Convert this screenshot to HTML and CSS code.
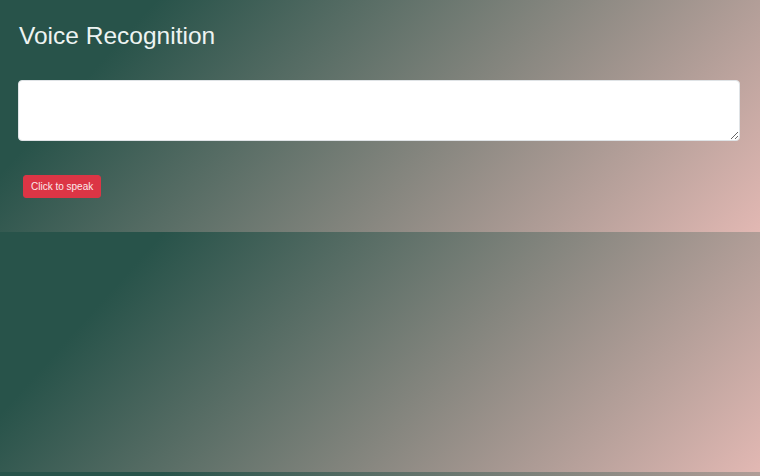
FILE: index.html
```html
<!DOCTYPE html>
<html lang="en">
<head>
<meta charset="utf-8">
<title>Voice Recognition</title>
<link rel="stylesheet" href="styles.css">
</head>
<body>
<main class="page">
  <h1 class="title">Voice Recognition</h1>
  <textarea class="transcript" rows="2"></textarea>
  <div class="actions">
    <button class="speak-btn" type="button">Click to speak</button>
  </div>
</main>
</body>
</html>
```
FILE: styles.css
```css
html {
  height: 100%;
  background-color: #28534a;
  background-image: linear-gradient(132deg, #28534a 16.8%, #e2b8b3 100%);
  background-size: 100% 240px;
  background-position: 0 -8px;
  background-repeat: repeat-y;
}

body {
  margin: 0;
  font-family: "Liberation Sans", Arial, sans-serif;
  color: #f4f6f5;
}

.page {
  display: flex;
  flex-direction: column;
  align-items: stretch;
  padding: 21px 20px 0 18px;
}

.title {
  margin: 0 0 0 1px;
  font-size: 24.5px;
  line-height: 1.2;
  font-weight: 400;
  color: #eef4f2;
}

.transcript {
  margin-top: 30px;
  box-sizing: border-box;
  height: 61px;
  width: 100%;
  padding: 6px 12px;
  border: 1px solid #dfe3e6;
  border-radius: 4px;
  background: #ffffff;
  font-family: "Liberation Sans", Arial, sans-serif;
  font-size: 16px;
  line-height: 1.5;
  resize: vertical;
}

.actions {
  display: flex;
  padding: 34px 0 0 5px;
}

.speak-btn {
  box-sizing: border-box;
  height: 23px;
  padding: 0 7px;
  border: 1px solid #dc3545;
  border-radius: 3px;
  background: #dc3545;
  color: #fbe9eb;
  font-family: "Liberation Sans", Arial, sans-serif;
  font-size: 10px;
  line-height: 1;
  cursor: pointer;
}
```
